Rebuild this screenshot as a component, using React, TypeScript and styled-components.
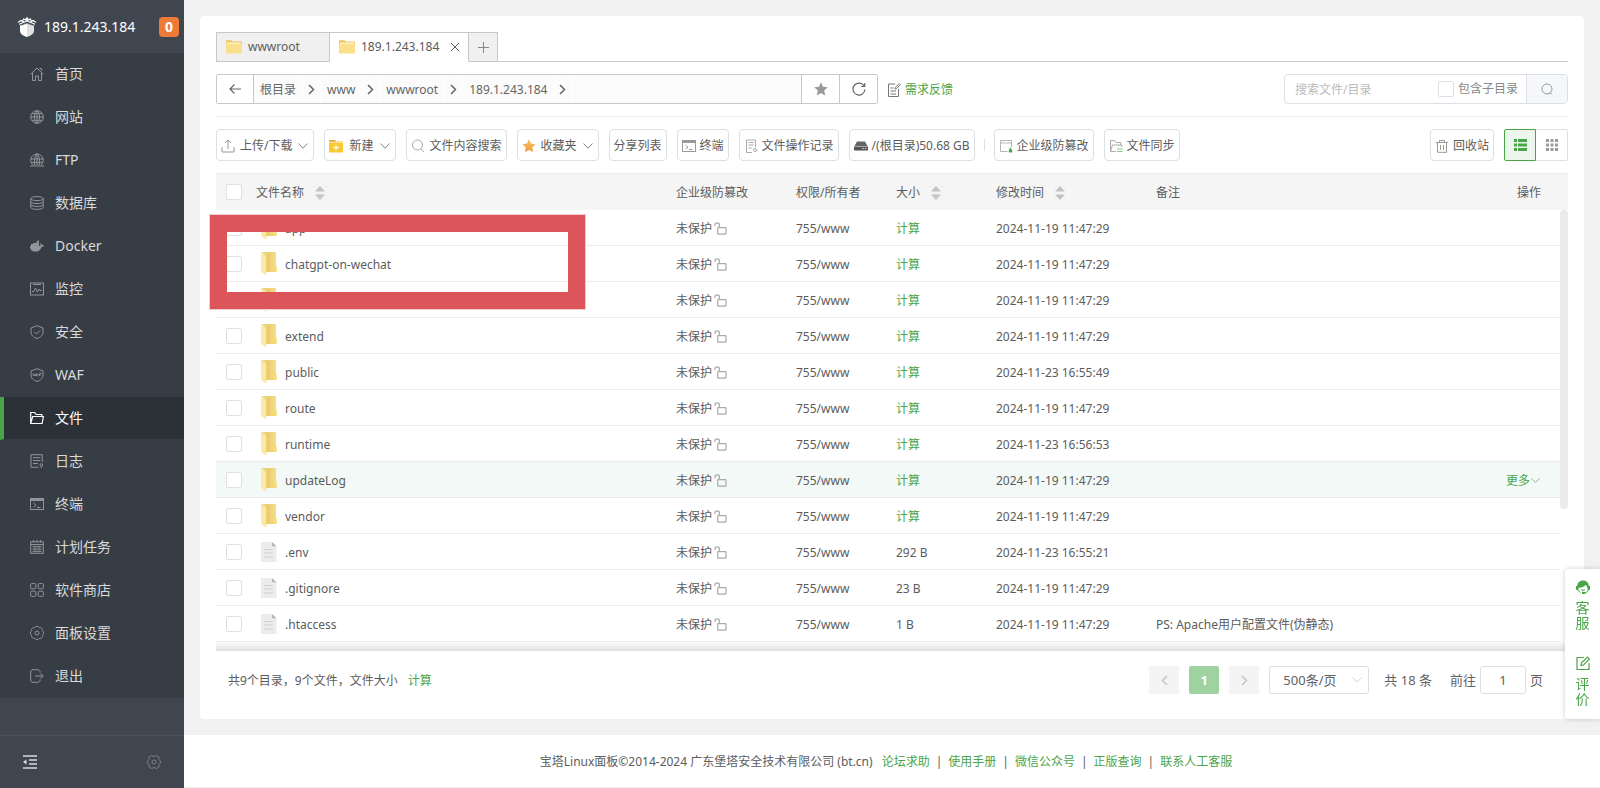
import React from 'react';
import styled, { createGlobalStyle, css } from 'styled-components';

const c = {
  green: '#4aa548',
  text: '#5c5c5c',
  line: '#ebebeb',
  control: '#dcdfe6',
  edge: '#c8c8c8',
};

const Global = createGlobalStyle`
  *, *::before, *::after { box-sizing: border-box; }
  body {
    margin: 0;
    background: #f1f1f1;
    color: ${c.text};
    font: 12px/18px "Noto Sans", "Noto Sans CJK SC", sans-serif;
  }
  button, input, select { font: inherit; color: inherit; margin: 0; }
  button { cursor: pointer; }
  a { color: inherit; text-decoration: none; }
  svg { display: block; flex: none; }
`;

const Page = styled.div`
  display: flex;
  height: 100vh;
  min-height: 760px;
`;

/* ---------- sidebar ---------- */

const Sidebar = styled.aside`
  display: flex;
  flex-direction: column;
  flex: 0 0 184px;
  background: #3f464f;
  color: #d8dadc;
  font-size: 14px;
`;
const Brand = styled.header`
  display: flex;
  align-items: center;
  gap: 7px;
  height: 53px;
  padding: 0 5px 0 17px;
  color: #fff;
`;
const Badge = styled.span`
  margin-left: auto;
  width: 20px;
  border-radius: 4px;
  background: #ee7a38;
  font-weight: 700;
  line-height: 20px;
  text-align: center;
`;
const Menu = styled.nav`
  background: #373d44;
`;
const MenuLink = styled.a<{ $active?: boolean }>`
  display: flex;
  align-items: center;
  gap: 11px;
  height: 43px;
  padding-left: 26px;
  border-left: 4px solid transparent;
  border-bottom: 1px solid #373d44;
  color: #d8dadc;
  svg { color: #92969b; }
  ${p => p.$active && css`
    border-left-color: ${c.green};
    background: #2c3037;
    color: #fff;
    svg { color: #fff; }
  `}
`;
const SidebarFoot = styled.footer`
  display: flex;
  align-items: center;
  justify-content: space-between;
  height: 53px;
  margin-top: auto;
  padding: 0 22px;
  border-top: 1px solid #4b525b;
`;
const PlainButton = styled.button`
  display: inline-flex;
  align-items: center;
  justify-content: center;
  padding: 0;
  border: 0;
  background: none;
`;

/* ---------- content ---------- */

const Main = styled.main`
  display: flex;
  flex: 1;
  flex-direction: column;
  min-width: 0;
`;
const Content = styled.div`
  display: flex;
  flex: 1;
  min-height: 0;
  padding: 16px;
`;
const Card = styled.section`
  position: relative;
  display: flex;
  flex: 1;
  flex-direction: column;
  min-width: 0;
  padding: 16px 16px 0;
  border-radius: 4px;
  background: #fff;
`;

const Tabs = styled.div`
  display: flex;
  height: 30px;
`;
const Tab = styled.div<{ $active?: boolean }>`
  display: flex;
  align-items: center;
  gap: 6px;
  min-width: 114px;
  padding: 0 8px 0 9px;
  border: 1px solid ${c.edge};
  border-width: 1px 1px 1px ${p => (p.$active ? '0' : '1px')};
  background: #f0f0f0;
  ${p => p.$active && css`
    border-bottom-color: #fff;
    background: #fff;
    button { margin-left: 5px; }
  `}
`;
const AddTab = styled.button`
  display: flex;
  align-items: center;
  justify-content: center;
  width: 29px;
  padding: 0;
  border: 1px solid ${c.edge};
  border-left: 0;
  background: #f0f0f0;
  color: #888;
`;
const TabRest = styled.div`
  flex: 1;
  border-bottom: 1px solid ${c.edge};
`;

const PathRow = styled.div`
  display: flex;
  align-items: center;
  padding: 12px 0;
  border-bottom: 1px solid ${c.line};
`;
const PathBar = styled.div`
  display: flex;
  flex: 0 1 662px;
  height: 30px;
  border: 1px solid ${c.edge};
  border-radius: 2px;
`;
const PathButton = styled.button<{ $side: 'left' | 'right' }>`
  display: flex;
  align-items: center;
  justify-content: center;
  width: ${p => (p.$side === 'left' ? '37px' : '38px')};
  padding: 0;
  border: 0 solid ${c.edge};
  border-width: ${p => (p.$side === 'left' ? '0 1px 0 0' : '0 0 0 1px')};
  background: #fff;
  color: #666;
`;
const Crumbs = styled.ol`
  display: flex;
  flex: 1;
  margin: 0;
  padding: 0;
  background: #fbfbfb;
  list-style: none;
`;
const Crumb = styled.li`
  display: flex;
  color: #666;
  a {
    padding: 0 6px;
    border-right: 1px solid #fff;
    line-height: 30px;
  }
`;
const CrumbArrow = styled.button`
  display: flex;
  align-items: center;
  justify-content: center;
  width: 18px;
  padding: 0;
  border: 0;
  border-right: 1px solid #fff;
  background: none;
`;
const Feedback = styled.a`
  display: flex;
  align-items: center;
  gap: 4px;
  margin-left: 9px;
  padding-top: 2px;
  color: ${c.green};
  svg { color: #777; }
`;
const Search = styled.form`
  display: flex;
  align-items: center;
  width: 284px;
  height: 30px;
  margin-left: auto;
  border: 1px solid ${c.control};
  border-radius: 4px;
  overflow: hidden;
`;
const SearchInput = styled.input`
  flex: 1;
  min-width: 0;
  padding: 2px 10px 0;
  border: 0;
  outline: 0;
  background: none;
  &::placeholder { color: #bbb; opacity: 1; }
`;
const SearchOption = styled.label`
  display: flex;
  align-items: center;
  gap: 4px;
  margin-right: 8px;
  color: #888;
`;
const SearchButton = styled.button`
  display: flex;
  align-items: center;
  justify-content: center;
  align-self: stretch;
  width: 41px;
  padding: 0;
  border: 0;
  border-left: 1px solid ${c.control};
  background: #f5f7fa;
  color: #999;
`;
const Check = styled.input.attrs({ type: 'checkbox' })`
  display: block;
  width: 16px;
  height: 16px;
  appearance: none;
  border: 1px solid ${c.control};
  border-radius: 2px;
  background: #fff;
`;

const Toolbar = styled.div`
  display: flex;
  gap: 10px;
  padding: 12px 0;
`;
const ToolButton = styled.button<{ $gap?: number }>`
  display: flex;
  align-items: center;
  gap: ${p => p.$gap || 4}px;
  height: 32px;
  padding: 2px 4px 0;
  border: 1px solid ${c.control};
  border-radius: 4px;
  background: #fff;
  white-space: nowrap;
`;
const ToolDivider = styled.span`
  align-self: center;
  width: 1px;
  height: 12px;
  margin: 0 -1px;
  background: ${c.control};
`;
const ToolRight = styled.div`
  display: flex;
  gap: 10px;
  margin-left: auto;
`;
const Views = styled.div`
  display: flex;
`;
const ViewButton = styled.button<{ $active?: boolean }>`
  display: flex;
  align-items: center;
  justify-content: center;
  width: 32px;
  height: 32px;
  padding: 0;
  border: 1px solid ${p => (p.$active ? c.green : c.control)};
  border-left-width: ${p => (p.$active ? '1px' : '0')};
  border-radius: ${p => (p.$active ? '2px 0 0 2px' : '0 2px 2px 0')};
  background: ${p => (p.$active ? '#edf6ed' : '#fff')};
  color: ${p => (p.$active ? c.green : '#999')};
`;

/* ---------- table ---------- */

const TableArea = styled.div`
  position: relative;
  flex: 1;
  min-height: 0;
  overflow: hidden;
  &::after {
    content: '';
    position: absolute;
    right: 0;
    bottom: 0;
    left: 0;
    height: 10px;
    background: linear-gradient(rgba(0, 0, 0, 0), rgba(0, 0, 0, 0.12));
  }
`;
const Table = styled.table`
  width: 100%;
  border-collapse: separate;
  border-spacing: 0;
  table-layout: fixed;
`;
const Th = styled.th<{ $w?: number; $right?: boolean; $check?: boolean }>`
  width: ${p => (p.$w ? `${p.$w}px` : 'auto')};
  height: 37px;
  padding: ${p => (p.$check ? '0 10px' : '2px 10px 0')};
  border-top: 1px solid ${c.line};
  background: #f5f5f5;
  font-weight: 400;
  text-align: left;
  ${p => p.$right && 'text-align: right; padding-right: 19px;'}
`;
const Gutter = styled.th`
  width: 8px;
  padding: 0;
  border-top: 1px solid ${c.line};
  background: #f5f5f5;
`;
const HeadLabel = styled.span`
  display: flex;
  align-items: center;
  gap: 11px;
`;
const Row = styled.tr<{ $hover?: boolean }>`
  td {
    background: ${p => (p.$hover ? '#f2f9f7' : '#fff')};
  }
`;
const Td = styled.td<{ $right?: boolean; $media?: boolean }>`
  height: 36px;
  padding: ${p => (p.$media ? '0 10px' : '2px 10px 0')};
  border-bottom: 1px solid ${c.line};
  white-space: nowrap;
  ${p => p.$right && 'text-align: right; padding-right: 19px;'}
`;
const FileName = styled.a`
  display: flex;
  align-items: center;
  gap: 8px;
  padding-left: 5px;
  span { padding-top: 2px; }
`;
const Guard = styled.span`
  display: flex;
  align-items: center;
  gap: 2px;
  svg { color: #aaa; }
`;
const GreenLink = styled.a`
  color: ${c.green};
`;
const MoreButton = styled(PlainButton)`
  color: ${c.green};
`;
const Thumb = styled.div`
  position: absolute;
  top: 37px;
  right: 0;
  width: 8px;
  height: 299px;
  border-radius: 4px;
  background: #ebebeb;
`;
const Marker = styled.div`
  position: absolute;
  top: 199px;
  left: 10px;
  width: 375px;
  height: 94px;
  border: 17px solid #db555a;
  box-shadow: 0 0 0 1px #f3cdce;
`;

/* ---------- pagination ---------- */

const TableFoot = styled.div`
  display: flex;
  align-items: center;
  justify-content: space-between;
  height: 68px;
  padding: 0 25px 10px 12px;
`;
const Summary = styled.p`
  display: flex;
  gap: 10px;
  margin: 0;
  padding-top: 2px;
`;
const Pager = styled.div`
  display: flex;
  align-items: center;
  gap: 10px;
  font-size: 13px;
  color: #606266;
`;
const PageButton = styled.button<{ $active?: boolean }>`
  display: flex;
  align-items: center;
  justify-content: center;
  width: 30px;
  height: 28px;
  padding: 0;
  border: 0;
  border-radius: 2px;
  background: ${p => (p.$active ? '#a0d1a0' : '#f4f4f5')};
  color: ${p => (p.$active ? '#fff' : '#c0c4cc')};
  font-weight: 700;
`;
const SizeBox = styled.div`
  position: relative;
  svg {
    position: absolute;
    top: 8px;
    right: 6px;
    color: #c0c4cc;
    pointer-events: none;
  }
`;
const SizeSelect = styled.select`
  display: block;
  width: 100px;
  height: 28px;
  padding: 0 13px;
  appearance: none;
  border: 1px solid ${c.control};
  border-radius: 3px;
  background: #fff;
`;
const Total = styled.span`
  margin: 0 8px 0 5px;
`;
const Jump = styled.label`
  display: flex;
  align-items: center;
  gap: 4px;
`;
const JumpInput = styled.input`
  width: 46px;
  height: 28px;
  padding: 0;
  border: 1px solid ${c.control};
  border-radius: 3px;
  text-align: center;
`;

const Footer = styled.footer`
  display: flex;
  align-items: center;
  justify-content: center;
  gap: 6px;
  height: 53px;
  padding: 2px 12px 0 0;
  border-bottom: 1px solid #eee;
  background: #fff;
  white-space: nowrap;
`;
const Copyright = styled.span`
  margin-right: 3px;
`;

const Float = styled.aside`
  position: fixed;
  right: 0;
  bottom: 69px;
  display: flex;
  flex-direction: column;
  align-items: center;
  gap: 26px;
  width: 35px;
  padding: 11px 0 13px;
  border-radius: 4px 0 0 4px;
  background: #fff;
  box-shadow: 0 0 5px rgba(0, 0, 0, 0.2);
`;
const FloatLink = styled.a`
  display: flex;
  flex-direction: column;
  gap: 6px;
  width: 14px;
  color: ${c.green};
  font-size: 14px;
  line-height: 15px;
  word-break: break-all;
`;

/* ---------- icons ---------- */

type IconProps = { children: React.ReactNode; w?: number; h?: number; sw?: number; box?: string };
const Icon = ({ children, w = 14, h = 14, sw = 1, box }: IconProps) => (
  <svg width={w} height={h} viewBox={box || `0 0 ${w} ${h}`} fill="none" stroke="currentColor" strokeWidth={sw} aria-hidden="true">
    {children}
  </svg>
);

const Logo = () => (
  <Icon w={20} h={20}>
    <g stroke="#fff" strokeWidth="1.1">
      <path d="M.8 5.300 10 1.600l9.200 3.700M2 7.300 10 4l8 3.300M2.800 3.200 8 5.200M17.200 3.200 12 5.200M6 1.800l4 1.600 4-1.600M10 0v3" />
    </g>
    <path d="M3 8.600 4.500 7.800v1.200L6.300 7v1.500L8.200 6.300v1.500L10 6v14c-4-1.300-7-3-7-6.500z" fill="#fff" stroke="none" />
    <path d="M17 8.600l-1.500-.8v1.200L13.700 7v1.500L11.800 6.300v1.500L10 6v14c4-1.300 7-3 7-6.500z" fill="#e0e0e0" stroke="none" />
  </Icon>
);

const menuIcons: Record<string, React.ReactNode> = {
  home: <path d="M.6 7.300 7 1l6.400 6.300M2.500 6v7.500h3V9h3v4.500h3V6M9.500 1.500h2v2" />,
  web: (
    <>
      <circle cx="7" cy="7" r="6.300" />
      <ellipse cx="7" cy="7" rx="2.600" ry="6.300" />
      <path d="M7 .7v12.600M.7 7h12.600M1.700 3.700h10.600M1.700 10.300h10.600" />
    </>
  ),
  ftp: (
    <>
      <path d="M2.800 12A6.300 6.300 0 1 1 11.200 12M7 .7V12M.7 6h12.600M1.500 9.300h11M4.800 12C3.800 8 4.500 3 7 .7 9.500 3 10.200 8 9.200 12" />
      <path d="M0 13h14" />
    </>
  ),
  db: (
    <>
      <ellipse cx="7" cy="2.600" rx="6.200" ry="2" />
      <path d="M.8 2.600v8.800c0 2.600 12.400 2.600 12.400 0V2.600M.8 5.600c0 2.600 12.400 2.600 12.400 0M.8 8.500c0 2.600 12.400 2.600 12.400 0" />
    </>
  ),
  docker: (
    <g fill="currentColor" stroke="none">
      <path d="M0 7h10.300c.4-.6.300-1.500-.1-2.200l.6-.6c.8.500 1.100 1.200 1.200 1.900.8-.1 1.500 0 2 .4-.4 1-1.300 1.400-2.500 1.400C10.500 11 8.500 12.600 5.300 12.600 1.900 12.600 0 10.600 0 7z" />
      <path d="M1 5h2v2H1zM3.100 4h2v3h-2zM5.200 3.500h2v3.500h-2zM7.300 1.500H9V7H7.300z" />
    </g>
  ),
  monitor: (
    <>
      <rect x=".5" y="1" width="13" height="12" />
      <path d="M3 2.500h8M2 9.500h2L5.500 6l2 4 1.500-3 1 1.500h2" />
    </>
  ),
  shield: <path d="M7 .7 13 3v4c0 3.300-2.500 5.400-6 6.500C3.500 12.400 1 10.300 1 7V3zM4.300 6.800 6.500 9l3.600-3.600" />,
  waf: (
    <>
      <path d="M7 .7 13 3v4c0 3.300-2.500 5.400-6 6.500C3.500 12.400 1 10.300 1 7V3z" />
      <path d="M2.800 5.500l.8 2.500.8-2 .8 2 .8-2.500M6.500 8.200V6h1.400v2.200M9.500 8.200V5.500h2M9.500 7h1.600" strokeWidth=".8" />
    </>
  ),
  folder: <path d="M.7 12.500V1.500h4l1.500 2h5.600v2M.7 12.500l2-7h10.700l-1.300 7z" strokeWidth="1.200" />,
  log: (
    <>
      <path d="M12.200 8V.7H1v12.600h7.500M3 3.700h7.300M3 6.600h7.300M3 9.500h5" />
      <circle cx="11.300" cy="11" r="1.300" />
      <path d="M11.300 12.500V14" />
    </>
  ),
  terminal: (
    <>
      <rect x=".5" y="1.500" width="13" height="11" />
      <path d="M.5 2.500h13" strokeWidth="3" />
      <path d="M3.500 6 6 8.200l-2.500 2M7 10.500h3.500" />
    </>
  ),
  plan: (
    <>
      <rect x=".7" y="1.800" width="12.600" height="11.500" />
      <path d="M3.500 0v2.500M7 0v2.500M10.500 0v2.500M.7 4.500h12.600M2.500 6.700h9M2.500 9h9M2.500 11.300h9" />
      <path d="M5 5.500v7M9 5.500v7" strokeWidth=".6" />
    </>
  ),
  store: (
    <>
      <rect x=".6" y=".6" width="5.200" height="5.200" rx="1" />
      <rect x="8.200" y=".6" width="5.200" height="5.200" rx="1" />
      <rect x=".6" y="8.200" width="5.200" height="5.200" rx="1" />
      <rect x="8.200" y="8.200" width="5.200" height="5.200" rx="1" />
    </>
  ),
  gear: (
    <>
      <path d="M12.360 9.220A2.500 2.500 0 0 1 9.220 12.360A2.500 2.500 0 0 1 4.780 12.360A2.500 2.500 0 0 1 1.640 9.220A2.500 2.500 0 0 1 1.640 4.780A2.500 2.500 0 0 1 4.780 1.640A2.500 2.500 0 0 1 9.220 1.640A2.500 2.500 0 0 1 12.360 4.780A2.500 2.500 0 0 1 12.360 9.220z" />
      <circle cx="7" cy="7" r="2" />
    </>
  ),
  exit: <path d="M10 3.500V2.300L8.500.7H2L.7 2v10L2 13.300h6.500l1.500-1.500v-1.300M5 7h8M10.500 4.300 13.200 7l-2.700 2.700" />,
};

const ChevronDown = ({ size = 12 }: { size?: number }) => (
  <Icon w={size} h={size} box="0 0 12 12"><path d="M1.500 3.500 6 8.200l4.500-4.700" opacity=".75" /></Icon>
);
const TabFolder = () => (
  <svg width="16" height="14" viewBox="0 0 16 14" aria-hidden="true">
    <path d="M0 1.500C0 .8.400.3 1 .3h4.500L7 1.500h8c.6 0 1 .4 1 1V6H0z" fill="#efc55e" />
    <path d="M1 2.500h14V5H1z" fill="#fff6d8" />
    <path d="M0 3.800h16V12.500c0 .6-.4 1-1 1H1c-.6 0-1-.4-1-1z" fill="#fbe08c" />
  </svg>
);
const RowFolder = () => (
  <svg width="16" height="24" viewBox="0 0 16 24" aria-hidden="true">
    <defs>
      <linearGradient id="folderBack" x1="0" x2="1">
        <stop offset="0" stopColor="#e6c566" />
        <stop offset="1" stopColor="#f8e28a" />
      </linearGradient>
    </defs>
    <path d="M4 0h11v12l1.300 5v3H5z" fill="url(#folderBack)" />
    <path d="M0 0h1.500L5.300 5v19L0 19.500z" fill="#fbe9a6" />
    <path d="M1 0h5v5z" fill="#eed27a" />
  </svg>
);
const RowFile = () => (
  <svg width="16" height="20" viewBox="0 0 16 20" aria-hidden="true">
    <path d="M0 0H11l4.500 4.300V20H0z" fill="#ececec" />
    <path d="M11 0v4.300h4.500z" fill="#b5b5b5" />
    <path d="M3 7.500h9M3 11h9M3 15h9" stroke="#cfcfcf" />
  </svg>
);
const OpenLock = () => (
  <Icon w={13} h={13} sw={1.2}>
    <rect x="3.700" y="5.600" width="8.300" height="6.500" rx=".6" />
    <path d="M1 4V3a2.200 2.200 0 0 1 4.400 0v2.600" />
  </Icon>
);
const Sorter = () => (
  <svg width="10" height="14" viewBox="0 0 10 14" aria-hidden="true">
    <path d="M0 5.500 5 0l5 5.500zM0 8.500h10L5 14z" fill="#c4c4c4" />
  </svg>
);

/* ---------- data ---------- */

const menu: [string, string][] = [
  ['home', '首页'],
  ['web', '网站'],
  ['ftp', 'FTP'],
  ['db', '数据库'],
  ['docker', 'Docker'],
  ['monitor', '监控'],
  ['shield', '安全'],
  ['waf', 'WAF'],
  ['folder', '文件'],
  ['log', '日志'],
  ['terminal', '终端'],
  ['plan', '计划任务'],
  ['store', '软件商店'],
  ['gear', '面板设置'],
  ['exit', '退出'],
];

type FileRow = { name: string; time: string; size?: string; note?: string; hover?: boolean };
const day = '2024-11-19 11:47:29';
const files: FileRow[] = [
  { name: 'app', time: day },
  { name: 'chatgpt-on-wechat', time: day },
  { name: 'config', time: day },
  { name: 'extend', time: day },
  { name: 'public', time: '2024-11-23 16:55:49' },
  { name: 'route', time: day },
  { name: 'runtime', time: '2024-11-23 16:56:53' },
  { name: 'updateLog', time: day, hover: true },
  { name: 'vendor', time: day },
  { name: '.env', time: '2024-11-23 16:55:21', size: '292 B' },
  { name: '.gitignore', time: day, size: '23 B' },
  { name: '.htaccess', time: day, size: '1 B', note: 'PS: Apache用户配置文件(伪静态)' },
];
const links = ['论坛求助', '使用手册', '微信公众号', '正版查询', '联系人工客服'];

export default function App() {
  return (
    <Page>
      <Global />
      <Sidebar>
        <Brand>
          <Logo />
          <span>189.1.243.184</span>
          <Badge>0</Badge>
        </Brand>
        <Menu>
          {menu.map(([icon, label]) => (
            <MenuLink key={icon} href="#" $active={icon === 'folder'}>
              <Icon>{menuIcons[icon]}</Icon>
              {label}
            </MenuLink>
          ))}
        </Menu>
        <SidebarFoot>
          <PlainButton aria-label="收起菜单">
            <Icon w={16} h={16} sw={1.6}>
              <path d="M1 2h14M7 6h8M7 10h8M1 14h14" />
              <path d="M4.500 5.500v5L1 8z" fill="currentColor" stroke="none" />
            </Icon>
          </PlainButton>
          <PlainButton aria-label="设置">
            <Icon w={16} h={16} sw={1}>
              <g stroke="#7b8086">
                <path d="M5.500 1.500 8 2.500l2.500-1 2.500 1.600V5.500L15 8l-2 2.500v2.400l-2.500 1.600L8 13.500l-2.500 1L3 12.900v-2.400L1 8l2-2.500V3.100z" />
                <circle cx="8" cy="8" r="2" />
              </g>
            </Icon>
          </PlainButton>
        </SidebarFoot>
      </Sidebar>

      <Main>
        <Content>
          <Card>
            <Tabs>
              <Tab><TabFolder />wwwroot</Tab>
              <Tab $active>
                <TabFolder />189.1.243.184
                <PlainButton aria-label="关闭">
                  <Icon w={10} h={10}><path d="M1 1l8 8M9 1 1 9" /></Icon>
                </PlainButton>
              </Tab>
              <AddTab aria-label="新建标签">
                <Icon w={11} h={11}><path d="M5.500 0v11M0 5.500h11" /></Icon>
              </AddTab>
              <TabRest />
            </Tabs>

            <PathRow>
              <PathBar>
                <PathButton $side="left" aria-label="返回">
                  <Icon w={12} h={12} sw={1.2}><path d="M12 6H1M5.500 1.500 1 6l4.500 4.500" /></Icon>
                </PathButton>
                <Crumbs>
                  {['根目录', 'www', 'wwwroot', '189.1.243.184'].map(part => (
                    <Crumb key={part}>
                      <a href="#">{part}</a>
                      <CrumbArrow aria-label={`展开 ${part}`}>
                        <Icon w={7} h={11} sw={1.5}><path d="M1 1l4.500 4.500L1 10" /></Icon>
                      </CrumbArrow>
                    </Crumb>
                  ))}
                </Crumbs>
                <PathButton $side="right" aria-label="收藏">
                  <svg width="14" height="14" viewBox="0 0 14 14" fill="#999" aria-hidden="true">
                    <path d="M7 .3l2 4.500 4.800.5-3.600 3.300 1 4.900L7 11l-4.200 2.500 1-4.900L.2 5.300 5 4.800z" />
                  </svg>
                </PathButton>
                <PathButton $side="right" aria-label="刷新">
                  <Icon w={14} h={14} sw={1.2}><path d="M12.300 4.200A6 6 0 1 0 13 7.500M12.700 1v3.500H9.200" /></Icon>
                </PathButton>
              </PathBar>
              <Feedback href="#">
                <Icon><path d="M8 1H1.500v12.500h10V6M3.500 5h3M3.500 8h5.500M3.500 11h5.500M8 6l.3-1.600L12.300.6l1.100 1.100-4 4z" /></Icon>
                需求反馈
              </Feedback>
              <Search onSubmit={e => e.preventDefault()}>
                <SearchInput placeholder="搜索文件/目录" aria-label="搜索文件/目录" />
                <SearchOption><Check />包含子目录</SearchOption>
                <SearchButton aria-label="搜索">
                  <Icon w={12} h={12}><circle cx="6" cy="6" r="5" /><path d="M8.500 9l2.500 2.500" /></Icon>
                </SearchButton>
              </Search>
            </PathRow>

            <Toolbar>
              <ToolButton $gap={5}>
                <Icon><g stroke="#999"><path d="M1 8v5h12V8M7 10V1.500M4 4l3-3 3 3" /></g></Icon>
                上传/下载<ChevronDown />
              </ToolButton>
              <ToolButton $gap={6}>
                <svg width="14" height="14" viewBox="0 0 14 14" aria-hidden="true">
                  <path d="M0 1h6l1.500 1.500H14V6H0z" fill="#e9a63a" />
                  <path d="M0 3.500h14V13.500H0z" fill="#f8c932" />
                  <path d="M0 3.200h14" stroke="#fff3c8" />
                  <path d="M7 6v5.500M4.200 8.700h5.600" stroke="#fff" strokeWidth="1.200" />
                </svg>
                新建<ChevronDown />
              </ToolButton>
              <ToolButton>
                <Icon><g stroke="#aaa"><circle cx="6.500" cy="6" r="5" /><path d="M10 10l3 3" /></g></Icon>
                文件内容搜索
              </ToolButton>
              <ToolButton $gap={5}>
                <svg width="14" height="14" viewBox="0 0 14 14" aria-hidden="true">
                  <defs>
                    <linearGradient id="starFill" x1="0" x2="0" y1="0" y2="1">
                      <stop offset="0" stopColor="#f6c56a" />
                      <stop offset="1" stopColor="#ef9a35" />
                    </linearGradient>
                  </defs>
                  <path d="M7 .3l2 4.300 4.600.6-3.400 3.200.9 4.700L7 10.900l-4.100 2.200.9-4.700L.4 5.200 5 4.600z" fill="url(#starFill)" />
                </svg>
                收藏夹<ChevronDown />
              </ToolButton>
              <ToolButton>分享列表</ToolButton>
              <ToolButton>
                <Icon><g stroke="#999">{menuIcons.terminal}</g></Icon>
                终端
              </ToolButton>
              <ToolButton>
                <Icon>
                  <g stroke="#aaa">
                    <path d="M11.500 8V1h-9v12.500H8M4.500 3.500h5M4.500 6h5M4.500 9h3" />
                    <circle cx="11" cy="11" r="1.500" />
                  </g>
                </Icon>
                文件操作记录
              </ToolButton>
              <ToolButton>
                <svg width="14" height="14" viewBox="0 0 14 14" aria-hidden="true">
                  <path d="M3 2.500h8L13.500 7H.5z" fill="#666" />
                  <path d="M0 7.500h14v3c0 .6-.4 1-1 1H1c-.6 0-1-.4-1-1z" fill="#555" />
                  <path d="M8.500 9.500h1.200M11 9.500h1.200" stroke="#fff" />
                </svg>
                /(根目录)50.68 GB
              </ToolButton>
              <ToolDivider />
              <ToolButton>
                <Icon>
                  <g stroke="#b5b5b5"><path d="M8.500 12.500h-7v-11h11V8M1.500 4h11" /></g>
                  <path d="M10 13.200v-2.500h3v2.500zM10.800 10.500V9h1.200v1.500" fill={c.green} stroke={c.green} strokeWidth=".4" />
                </Icon>
                企业级防篡改
              </ToolButton>
              <ToolButton>
                <Icon>
                  <g stroke="#aaa"><path d="M1.500 12V1.500h4l1.500 2h4.500v2.500M7 12.500H1.500l2-6.500h9.500l-.5 2" /></g>
                  <path d="M8 10h5.500M8 12.500h5.500" stroke="#8bc68a" />
                </Icon>
                文件同步
              </ToolButton>
              <ToolRight>
                <ToolButton>
                  <Icon><g stroke="#999"><path d="M.8 3.500h12.400M4.500 3.500v-2h5v2M2.500 3.500v9.800h9V3.500M5.500 6v5M8.500 6v5" /></g></Icon>
                  回收站
                </ToolButton>
                <Views>
                  <ViewButton $active aria-label="列表视图">
                    <Icon w={13} h={12}>
                      <path d="M0 0h3v3H0zM4 0h9v3H4zM0 4.500h3v3H0zM4 4.500h9v3H4zM0 9h3v3H0zM4 9h9v3H4z" fill="currentColor" stroke="none" />
                    </Icon>
                  </ViewButton>
                  <ViewButton aria-label="图标视图">
                    <Icon w={12} h={12}>
                      <path d="M0 0h3v3H0zM4.500 0h3v3h-3zM9 0h3v3H9zM0 4.500h3v3H0zM4.500 4.500h3v3h-3zM9 4.500h3v3H9zM0 9h3v3H0zM4.500 9h3v3h-3zM9 9h3v3H9z" fill="currentColor" stroke="none" />
                    </Icon>
                  </ViewButton>
                </Views>
              </ToolRight>
            </Toolbar>

            <TableArea>
              <Table>
                <thead>
                  <tr>
                    <Th $w={30} $check><Check aria-label="全选" /></Th>
                    <Th $w={420}><HeadLabel>文件名称<Sorter /></HeadLabel></Th>
                    <Th $w={120}>企业级防篡改</Th>
                    <Th $w={100}>权限/所有者</Th>
                    <Th $w={100}><HeadLabel>大小<Sorter /></HeadLabel></Th>
                    <Th $w={160}><HeadLabel>修改时间<Sorter /></HeadLabel></Th>
                    <Th>备注</Th>
                    <Th $w={100} $right>操作</Th>
                    <Gutter />
                  </tr>
                </thead>
                <tbody>
                  {files.map(f => (
                    <Row key={f.name} $hover={f.hover}>
                      <Td $media><Check aria-label={f.name} /></Td>
                      <Td $media>
                        <FileName href="#">
                          {f.size ? <RowFile /> : <RowFolder />}
                          <span>{f.name}</span>
                        </FileName>
                      </Td>
                      <Td><Guard>未保护<OpenLock /></Guard></Td>
                      <Td>755/www</Td>
                      <Td>{f.size || <GreenLink href="#">计算</GreenLink>}</Td>
                      <Td>{f.time}</Td>
                      <Td>{f.note}</Td>
                      <Td $right>{f.hover && <MoreButton>更多<ChevronDown size={11} /></MoreButton>}</Td>
                    </Row>
                  ))}
                </tbody>
              </Table>
              <Thumb />
            </TableArea>

            <TableFoot>
              <Summary>共9个目录，9个文件，文件大小<GreenLink href="#">计算</GreenLink></Summary>
              <Pager>
                <PageButton aria-label="上一页">
                  <Icon w={7} h={11} sw={1.5}><path d="M6 1 1.500 5.500 6 10" /></Icon>
                </PageButton>
                <PageButton $active>1</PageButton>
                <PageButton aria-label="下一页">
                  <Icon w={7} h={11} sw={1.5}><path d="M1 1l4.500 4.500L1 10" /></Icon>
                </PageButton>
                <SizeBox>
                  <SizeSelect aria-label="每页条数"><option>500条/页</option></SizeSelect>
                  <ChevronDown />
                </SizeBox>
                <Total>共 18 条</Total>
                <Jump>前往<JumpInput defaultValue="1" />页</Jump>
              </Pager>
            </TableFoot>
            <Marker />
          </Card>
        </Content>
        <Footer>
          <Copyright>宝塔Linux面板©2014-2024 广东堡塔安全技术有限公司 (bt.cn)</Copyright>
          {links.map((l, i) => (
            <React.Fragment key={l}>
              {i > 0 && <span>|</span>}
              <GreenLink href="#">{l}</GreenLink>
            </React.Fragment>
          ))}
        </Footer>
      </Main>

      <Float>
        <FloatLink href="#">
          <Icon>
            <path d="M1.200 7.500C.8 3 3.500.5 7 .5S13.200 3 12.800 7.500l-1.600.3C11 6.500 10.500 5.500 9.500 5 8.500 6.500 6 7.800 3 7.800z" fill="currentColor" stroke="none" />
            <path d="M0 6h2.500v4H1.200C.5 10 0 9.500 0 9zM14 6h-2.500v4h1.300c.7 0 1.200-.5 1.200-1zM6 11.800h3V14H6z" fill="currentColor" stroke="none" />
            <path d="M5 9.500c1 1 3 1 4 0M12.200 10c-.6 1.800-1.700 2.800-3.400 3M2 10c.6 1.300 1.500 2 2.500 2.400" />
          </Icon>
          客服
        </FloatLink>
        <FloatLink href="#">
          <Icon sw={1.2}><path d="M8 1.500H1v12h12V7M5 9.500l.5-2.500L11.500 1 13.500 3 7.500 9z" /></Icon>
          评价
        </FloatLink>
      </Float>
    </Page>
  );
}
